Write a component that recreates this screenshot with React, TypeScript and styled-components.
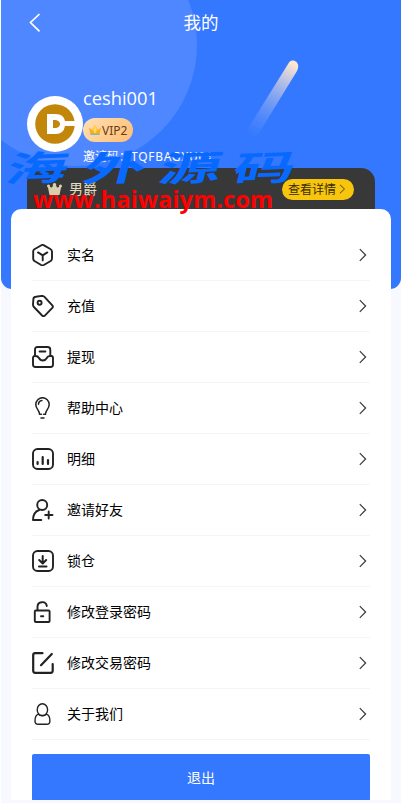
import React from "react";
import styled, { createGlobalStyle } from "styled-components";

const GlobalStyle = createGlobalStyle`
  * { box-sizing: border-box; }
  body { margin: 0; background: #fff; overflow: hidden; }
`;

const Page = styled.div`
  position: relative;
  height: 803px;
  margin-left: 1px;
  width: 400px;
  overflow: hidden;
  background: #f8f9ff;
  font-family: "Noto Sans", "Noto Sans CJK SC", sans-serif;
  color: #000;
`;

const Header = styled.header`
  position: relative;
  height: 289px;
  background: #3478ff;
  border-radius: 0 0 11px 11px;
  overflow: hidden;
`;

const Decoration = styled.svg`
  position: absolute;
  inset: 0;
`;

const NavBar = styled.nav`
  position: relative;
  display: grid;
  grid-template-columns: 60px 1fr 60px;
  align-items: center;
  height: 45px;
  color: #fff;
`;

const BackButton = styled.button`
  display: flex;
  padding: 0 0 0 27px;
  border: 0;
  background: none;
  color: inherit;
`;

const Title = styled.h1`
  margin: 0 0 2px;
  text-align: center;
  font-family: "Noto Sans CJK SC", sans-serif;
  font-size: 17.5px;
  line-height: 26px;
  font-weight: 400;
`;

const Profile = styled.section`
  position: relative;
  display: flex;
  height: 123px;
  padding: 41px 0 0 26px;
  color: #fff;
`;

const Avatar = styled.svg`
  flex: none;
  margin-top: 10px;
`;

const UserInfo = styled.div`
  display: flex;
  flex-direction: column;
  align-items: flex-start;
`;

const UserName = styled.div`
  height: 32px;
  font-family: "Open Sans", sans-serif;
  font-size: 18.3px;
  line-height: 24px;
`;

const VipBadge = styled.div`
  display: flex;
  align-items: center;
  gap: 1px;
  width: 50px;
  height: 24px;
  padding-left: 6px;
  border-radius: 12px;
  background: linear-gradient(135deg, #ffe0b5, #ffbd73);
  color: #683c16;
  font-size: 12px;
`;

const Invite = styled.div`
  display: flex;
  margin-top: 6px;
  font-size: 12px;
  line-height: 18px;
  white-space: nowrap;
`;

const InviteCode = styled.span`
  letter-spacing: 0.7px;
`;

const RankBar = styled.section`
  position: relative;
  display: flex;
  align-items: center;
  width: 348px;
  height: 60px;
  margin-left: 26px;
  padding: 0 21px 18px 20px;
  border-radius: 14px 14px 0 0;
  background: #383838;
  color: #e5dcc0;
`;

const RankName = styled.span`
  flex: 1;
  margin-left: 7px;
  font-size: 14px;
  line-height: 20px;
`;

const DetailButton = styled.button`
  display: flex;
  align-items: center;
  gap: 1px;
  width: 72px;
  height: 21px;
  padding: 0 0 1px 6px;
  border: 0;
  border-radius: 11px;
  background: #f7c50d;
  color: #392d08;
  font-family: "Noto Sans CJK SC", sans-serif;
  font-size: 12px;
  white-space: nowrap;
`;

const Card = styled.main`
  position: relative;
  height: 591px;
  margin: -80px 10px 0;
  padding: 21px 21px 0;
  border-radius: 10px 10px 0 0;
  background: #fff;
  overflow: hidden;
`;

const MenuRow = styled.div`
  display: flex;
  align-items: center;
  height: 51px;
  border-bottom: 1px solid #f5f5f6;
`;

const MenuIcon = styled.svg`
  flex: none;
  width: 22px;
  height: 22px;
  fill: none;
  stroke: #222;
  stroke-width: 1.9;
  stroke-linecap: round;
  stroke-linejoin: round;
`;

const MenuLabel = styled.span`
  flex: 1;
  margin: 0 0 2px 13px;
  font-family: "Noto Sans CJK SC", sans-serif;
  font-size: 14px;
  line-height: 20px;
`;

const Chevron = styled.svg`
  margin-right: 3px;
  fill: none;
  stroke: #3d3530;
  stroke-width: 1.2;
`;

const LogoutButton = styled.button`
  display: block;
  width: 338px;
  height: 47px;
  margin-top: 14px;
  padding: 0 0 2px;
  border: 0;
  border-radius: 2px;
  background: #3478ff;
  color: #fff;
  font-family: "Noto Sans CJK SC", sans-serif;
  font-size: 14px;
`;

const Watermark = styled.div`
  position: absolute;
  left: 0;
  top: 144px;
  pointer-events: none;
`;

const Brush = styled.div`
  display: grid;
  grid-template-columns: 77px 76px 74px 75px;
  height: 48px;
  padding-left: 5px;
  color: #0869ff;
  font-family: "Noto Sans CJK SC", sans-serif;
  font-size: 35px;
  font-weight: 700;
  line-height: 46px;
`;

const BrushGlyph = styled.span`
  display: block;
  width: 36px;
  transform: scaleX(1.75) skewX(-12deg) rotate(-4deg);
  transform-origin: 0 60%;
`;

const SiteName = styled.div`
  margin: -10px 0 0 32px;
  color: #f00;
  font-family: "Open Sans", "Noto Sans", sans-serif;
  font-size: 23.7px;
  font-weight: 700;
  line-height: 34px;
  white-space: nowrap;
`;

const items: { label: string; icon: React.ReactNode }[] = [
  {
    label: "实名",
    icon: <><path d="M9.4 1.2Q10.5.6 11.6 1.2L18.3 5Q20 6 20 7.5v7Q20 16 18.7 17l-6.9 4Q10.5 21.7 9.2 21l-6.8-4Q1.2 16 1.2 14.7V7.3Q1.2 6 2.4 5.2Z" /><path d="m6 8.4 4.7 3 4.6-3M10.7 11.4v5" /></>,
  },
  {
    label: "充值",
    icon: <><path d="M3.8 1.7 10 .9q1.5 0 2.5 1l7.800 8.500q1.100 1.300 0 2.500l-7.200 7.500q-1.500 1.500-3 .1L1.900 12q-1-1-.9-2.500l.4-5.600q.2-2 2.400-2.200Z" /><circle cx="7.6" cy="7.8" r="2" /></>,
  },
  {
    label: "提现",
    icon: <path d="M3 10V3.7Q3 1 5.5 1h10Q18.3 1 18.3 3.7V10M7.6 5.500h5.800M3.500 10H2.700Q1 10 1 12v6.500Q1 21 3.500 21h15q2.500 0 2.500-2.500V12q0-2-1.700-2h-1.500q-2 0-3 2-1.400 2.500-4 2.500T7 12q-1.200-2-3.500-2Z" />,
  },
  {
    label: "帮助中心",
    icon: <g strokeWidth="1.5"><path d="M7.3 16.2c0-2.8-3.5-4.3-3.5-8.8a6.7 6.7 0 0 1 13.4 0c0 4.5-3.5 6-3.5 8.8M7.4 17.3h2m2.2 0h2M9 21h3M6.500 7.200c0-2 1.500-3.500 3.400-3.800" /></g>,
  },
  {
    label: "明细",
    icon: <><rect x="1" y="1" width="20" height="20" rx="4.5" /><path d="M5.6 14v2M10.7 9v7M16 12v4" strokeWidth="2.2" /></>,
  },
  {
    label: "邀请好友",
    icon: <><circle cx="10.2" cy="6" r="5" /><path d="M7.2 11C3 12.5 1 16.5 1 21h8.3M16.7 12.5v7M13.2 16h7.3" /></>,
  },
  {
    label: "锁仓",
    icon: <><rect x="1" y="1" width="20" height="20" rx="4.5" /><path d="M10.7 6v7.2M7.2 10l3.5 3.5 3.5-3.5M7 16.5h7.5" strokeWidth="2" /></>,
  },
  {
    label: "修改登录密码",
    icon: <><rect x="2.8" y="9.5" width="14.8" height="11.5" rx="1" /><path d="M5.5 9V5.8C5.5.2 13.8-.6 14.8 5M9 15.3h2.3" /></>,
  },
  {
    label: "修改交易密码",
    icon: <g strokeWidth="2.2"><path d="M10.5 1.2H3.2Q1.2 1.2 1.2 3.2v15.6q0 2 2 2h15.5q2 0 2-2v-6.7M9 13.2 19.8 2" /></g>,
  },
  {
    label: "关于我们",
    icon: <g strokeWidth="1.4"><ellipse cx="10.4" cy="6.7" rx="5.2" ry="6" /><path d="M6.3 11.2C3.7 12.2 3 15 3 18q0 3.3 3.2 3.3h8.5q3.2 0 3.2-3.3c0-3-.7-5.8-3.4-6.8-2.2 1.8-6 1.8-8.2 0Z" /></g>,
  },
];

const ArrowRight = () => (
  <Chevron width="8" height="14" viewBox="0 0 8 14">
    <path d="m.8 1.200 5.800 5.800L.8 12.800" />
  </Chevron>
);

export default function App() {
  return (
    <>
      <GlobalStyle />
      <Page>
        <Header>
          <Decoration width="400" height="289" viewBox="1 0 400 289">
            <defs>
              <linearGradient id="beam" gradientUnits="userSpaceOnUse" x1="294" y1="64" x2="251" y2="137">
                <stop stopColor="#ffe7d1" />
                <stop offset="1" stopColor="#7ba3ff" stopOpacity="0" />
              </linearGradient>
            </defs>
            <circle cx="76" cy="45" r="121" fill="#4e87ff" />
            <path d="M289 62.5c3.5-4 9.600-1.200 9.200 4.500q0 2-1.500 4.500L256 138q-8 0-9-8Z" fill="url(#beam)" />
          </Decoration>
          <NavBar>
            <BackButton aria-label="返回">
              <svg width="14" height="20" viewBox="0 0 14 20" fill="none" stroke="#fff" strokeWidth="1.7">
                <path d="M11.5 1 2.500 9.500l9 8.800" />
              </svg>
            </BackButton>
            <Title>我的</Title>
          </NavBar>
          <Profile>
            <Avatar width="56" height="56" viewBox="0 0 56 56">
              <circle cx="28" cy="28" r="28" fill="#fff" />
              <circle cx="28" cy="28" r="19.8" fill="#c1860a" />
              <path fillRule="evenodd" fill="#fff" d="M20 18h9q7.500 0 9 7h11v5H38q-1.500 8-9 8h-9Zm6 6v8h3q4-1 4-4t-4-4Z" />
            </Avatar>
            <UserInfo>
              <UserName>ceshi001</UserName>
              <VipBadge>
                <svg width="12" height="12" viewBox="0 0 12 12">
                  <path d="M0 3.500 3.200 6 6 1l2.800 5L12 3.500 10.500 10.500h-9Z" fill="#ffad18" />
                  <path d="m6 1 2 5-2 4-2-4Z" fill="#ffd958" />
                  <path d="M1.500 9.500h9v1.500h-9Z" fill="#7abbb9" />
                </svg>
                VIP2
              </VipBadge>
              <Invite>
                邀请码：<InviteCode>TQFBAGXU01</InviteCode>
              </Invite>
            </UserInfo>
          </Profile>
          <RankBar>
            <svg width="15" height="14" viewBox="0 0 15 14" fill="#d9cfad">
              <path d="M1 5.500a1.500 1.500 0 1 1 1.800-.6L5 5.500l1-2a1.700 1.700 0 1 1 3 0l1 2 2.200-.6A1.500 1.500 0 1 1 14 5.500L12.500 13h-10Z" />
            </svg>
            <RankName>男爵</RankName>
            <DetailButton>
              查看详情
              <svg width="9" height="10" viewBox="0 0 9 10" fill="none" stroke="#54430a">
                <path d="m3 .8 4.500 4.200L3 9.200" />
              </svg>
            </DetailButton>
          </RankBar>
        </Header>
        <Card>
          {items.map(({ label, icon }) => (
            <MenuRow key={label}>
              <MenuIcon viewBox="0 0 22 22">{icon}</MenuIcon>
              <MenuLabel>{label}</MenuLabel>
              <ArrowRight />
            </MenuRow>
          ))}
          <LogoutButton>退出</LogoutButton>
        </Card>
        <Watermark>
          <Brush>
            {[..."海外源码"].map((glyph) => (
              <BrushGlyph key={glyph}>{glyph}</BrushGlyph>
            ))}
          </Brush>
          <SiteName>www.haiwaiym.com</SiteName>
        </Watermark>
      </Page>
    </>
  );
}
